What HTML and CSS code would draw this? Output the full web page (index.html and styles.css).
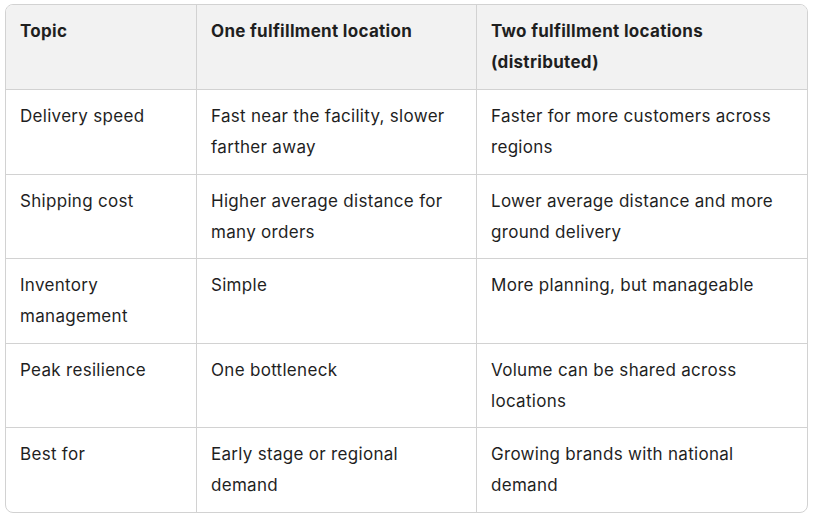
FILE: index.html
```html
<!DOCTYPE html>
<html>
<head>
<meta charset="utf-8">
<link rel="stylesheet" href="styles.css">
</head>
<body>
<div class="wrap">
<table class="grid">
<colgroup><col class="c1"><col class="c2"><col class="c3"></colgroup>
<thead>
<tr><th>Topic</th><th>One fulfillment location</th><th>Two fulfillment locations (distributed)</th></tr>
</thead>
<tbody>
<tr><td>Delivery speed</td><td>Fast near the facility, slower farther away</td><td>Faster for more customers across regions</td></tr>
<tr><td>Shipping cost</td><td>Higher average distance for many orders</td><td>Lower average distance and more ground delivery</td></tr>
<tr><td>Inventory management</td><td>Simple</td><td>More planning, but manageable</td></tr>
<tr><td>Peak resilience</td><td>One bottleneck</td><td>Volume can be shared across locations</td></tr>
<tr><td>Best for</td><td>Early stage or regional demand</td><td>Growing brands with national demand</td></tr>
</tbody>
</table>
</div>
</body>
</html>
```
FILE: styles.css
```css
html, body { margin: 0; padding: 0; background: #fff; }
body { font-family: Inter, "Noto Sans", sans-serif; color: #1f1f1f; }
.wrap { padding: 4px 6px 0 5px; }
.grid {
  width: 803px;
  border-collapse: separate;
  border-spacing: 0;
  border: 1px solid #d2d2d2;
  border-radius: 8px;
  overflow: hidden;
  table-layout: fixed;
  font-size: 17px;
  letter-spacing: 0.3px;
  line-height: 31px;
}
.c1 { width: 191px; }
.c2 { width: 280px; }
.c3 { width: auto; }
th, td {
  text-align: left;
  vertical-align: top;
  padding: 11px 14px 11px 14px;
  border-right: 1px solid #d2d2d2;
  border-bottom: 1px solid #d2d2d2;
}
td { padding-top: 11px; padding-bottom: 10.5px; }
th:last-child, td:last-child { border-right: none; }
tbody tr:last-child td { border-bottom: none; }
th { background: #f2f2f2; font-weight: 700; }
td { font-weight: 400; }
```
